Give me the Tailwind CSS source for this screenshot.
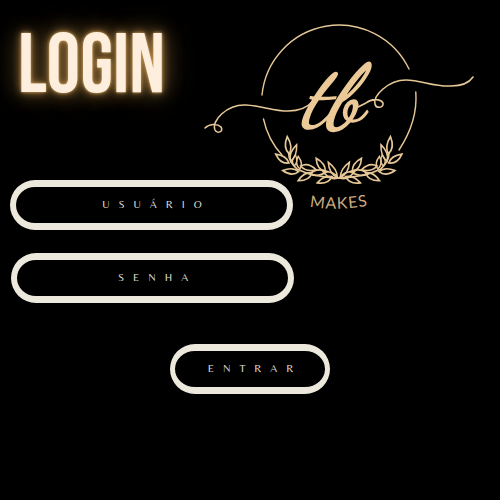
<!DOCTYPE html>
<html lang="pt-BR">
<head>
<meta charset="utf-8">
<meta name="viewport" content="width=device-width, initial-scale=1">
<title>Login - TB Makes</title>
<script src="https://cdn.jsdelivr.net/npm/@tailwindcss/browser@4"></script>
</head>
<body class="min-h-screen bg-black font-['Belleza','Marcellus','Lato',sans-serif] text-[#ece8dc]">
<main>
  <header class="flex items-start justify-between pl-4.5 pr-5 pt-[15px]">
    <h1 class="pt-2 font-['Bebas_Neue','Open_Sans_Condensed','Roboto_Condensed','Liberation_Sans_Narrow',sans-serif] text-[84px] leading-[88px] font-normal text-[#fdeedd] [text-shadow:0_0_3px_#d9a860,0_0_9px_#a98045,0_0_20px_#6e5229,0_0_34px_#4d3a20]">LOGIN</h1>
    <svg class="-ml-10 -mb-12 h-[200px] w-[280px] shrink-0" viewBox="200 15 280 200" fill="none" stroke="#e6c797" stroke-linecap="round" role="img" aria-label="TB Makes">
      <defs>
        <path id="leaf" d="M0 0C12-11 30-11 48 0C30 9 12 9 0 0Z"/>
        <path id="word" d="M298 204Q338 214 380 203"/>
        <g id="branch">
          <path d="M86 100Q86 125 112 148Q160 172 236 174"/>
          <use href="#leaf" transform="translate(88 102) rotate(-97) scale(1.1 1)"/>
          <use href="#leaf" transform="translate(92 124) rotate(-70) scale(1.1 .9)"/>
          <use href="#leaf" transform="translate(87 129) rotate(-146)"/>
          <use href="#leaf" transform="translate(103 138) rotate(-84) scale(.7 .8)"/>
          <use href="#leaf" transform="translate(120 147) rotate(-98) scale(.8 .9)"/>
          <use href="#leaf" transform="translate(116 155) rotate(-176)"/>
          <use href="#leaf" transform="translate(122 138) rotate(14)"/>
          <use href="#leaf" transform="translate(156 158) rotate(150)"/>
          <use href="#leaf" transform="translate(196 154) rotate(-125)"/>
          <use href="#leaf" transform="translate(150 162) rotate(-8) scale(1.1 1)"/>
          <use href="#leaf" transform="translate(232 172) rotate(-121) scale(1.1 .9)"/>
          <use href="#leaf" transform="translate(216 170) rotate(157)"/>
          <use href="#leaf" transform="translate(234 174) rotate(-157)"/>
        </g>
      </defs>
      <path stroke-width="1.4" d="M262 95A77.5 77.5 0 0 1 409 69M263.500 119Q268 140 282 155M415.800 92Q418 121 399 150"/>
      <path stroke-width="1.6" d="M205 128C209 124 217 123 221 127C224 132 217 134 215 130C211 121 227 104 246 105C263 106 273 111 288 111C299 111 307 108 313 101M358 107L366 103C371 99 380 98 383 103C384 108 376 109 375 104C373 96 388 80 406 80C421 80 434 87 451 86C462 86 469 83 473 77"/>
      <g stroke-width="5" transform="translate(260 120) scale(.3333)">
        <use href="#branch"/>
        <use href="#branch" transform="translate(473 0) scale(-1 1)"/>
      </g>
      <text x="302" y="125" font-size="88" font-family="'Dancing Script','Great Vibes','Allura','Pacifico','Liberation Serif',serif" font-style="italic" fill="#ecca98" stroke="#ecca98" stroke-width="1.5">tb</text>
      <text font-size="16" font-family="'Lato',sans-serif" letter-spacing="1" fill="#c9ab7c" stroke="none"><textPath href="#word" startOffset="50%" text-anchor="middle">MAKES</textPath></text>
    </svg>
  </header>

  <form class="relative flex flex-col px-[10px] pt-[13px]" onsubmit="return false">
    <input aria-label="Usuário" name="usuario" type="text" autocomplete="username" placeholder="USUÁRIO" class="h-[50px] w-[283px] max-w-full rounded-[25px] border-x-6 border-y-7 border-[#ece8dc] bg-black pl-2.5 pb-0.5 text-center text-[11px] tracking-[9px] placeholder:text-[#d8d5cb] placeholder:opacity-100">
    <input aria-label="Senha" name="senha" type="password" autocomplete="current-password" placeholder="SENHA" class="mt-[23px] ml-px h-[50px] w-[283px] max-w-full rounded-[25px] border-x-6 border-y-7 border-[#ece8dc] bg-black pl-2.5 pb-0.5 text-center text-[11px] tracking-[9px] placeholder:text-[#d8d5cb] placeholder:opacity-100">
    <button type="submit" class="mt-[41px] h-[50px] w-40 self-center rounded-[25px] border-x-5 border-y-7 border-[#ece8dc] bg-black pl-2.5 pb-0.5 text-center text-[11px] tracking-[9px] text-[#d8d5cb]">ENTRAR</button>
  </form>
</main>
</body>
</html>
